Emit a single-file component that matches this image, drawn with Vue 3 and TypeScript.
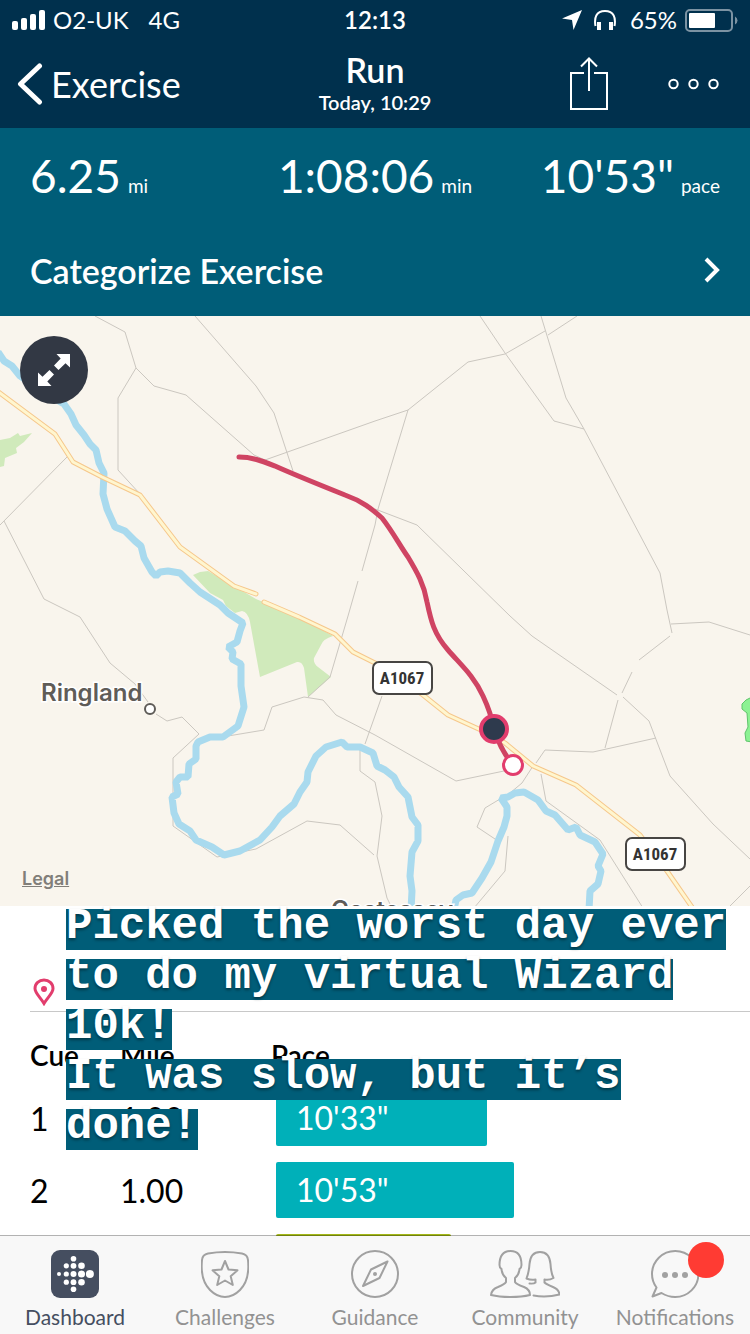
<script setup lang="ts">
interface Split {
  cue: number
  mile: string
  pace: string
  share: number
  color: string
}

interface Tab {
  id: string
  label: string
}

const stats = [
  { value: '6.25', unit: 'mi' },
  { value: '1:08:06', unit: 'min' },
  { value: `10'53"`, unit: 'pace' },
]

const splits: Split[] = [
  { cue: 1, mile: '1.00', pace: `10'33"`, share: 47, color: '#00b0b9' },
  { cue: 2, mile: '1.00', pace: `10'53"`, share: 53, color: '#00b0b9' },
]

const nextSplit = { share: 39, color: '#a3b819' }

const caption = [
  'Picked the worst day ever',
  'to do my virtual Wizard',
  '10k!',
  'It was slow, but it’s',
  'done!',
]

const tabs: Tab[] = [
  { id: 'dashboard', label: 'Dashboard' },
  { id: 'challenges', label: 'Challenges' },
  { id: 'guidance', label: 'Guidance' },
  { id: 'community', label: 'Community' },
  { id: 'notifications', label: 'Notifications' },
]

const logoDots: [number, number, number][] = [
  [22.5, 8.7, 2.8],
  [15.3, 15.8, 2.6], [22.5, 15.8, 2.9], [30.5, 15.8, 3.3],
  [8, 24, 2], [15.3, 24, 2.6], [22.5, 24, 3], [30.5, 24, 3.5], [38.9, 24, 4],
  [15.3, 32.2, 2.6], [22.5, 32.2, 2.9], [30.5, 32.2, 3.3],
  [22.5, 39.3, 2.8],
]

const lanes = [
  '95,0 125,16 136,52 154,70 186,79 254,139 265,144',
  '136,52 118,82 118,154 140,178',
  '195,0 256,70 274,97 293,155',
  '265,144 375,105 408,94 468,46 505,38 545,15',
  '548,19 577,0',
  '480,0 505,37 554,105 584,113',
  '541,0 566,82 584,113 660,257 667,294 672,317',
  '408,94 378,193 375,209 362,255',
  '358,265 348,300 330,361 308,381',
  '375,193 417,209 510,300 532,320 617,379',
  '623,381 649,405 670,460 713,508 750,543',
  '67,141 0,209',
  '4,205 44,283 80,301 110,347 135,368 148,386',
  '156,398 167,405 182,401 199,418 173,442 173,510 217,541 256,533 307,505 340,509 374,539',
  '360,434 360,455 375,466 382,500 377,540 387,582 392,592',
  '228,420 264,414 272,391 304,381 323,384 336,399 375,419 456,465 504,455',
  '382,380 365,428',
  '671,308 709,306 750,319',
  '670,320 639,344',
  '632,356 622,377',
  '618,384 605,432',
  '536,447 545,434 593,436 656,422',
  '533,450 522,467 510,477 485,492 477,511 495,523',
  '541,458 546,485 600,524 643,592',
  '508,520 505,555 474,592',
  '750,570 728,592',
]

const rivers = [
  '-2,36 4,45 12,50 20,60 40,74 64,88 71,98 76,109 84,119 90,128 96,134 99,147 104,157 103,178 107,193 115,211 125,215 135,225 141,230 144,242 152,256 156,260 160,256 168,255 180,257 190,267 200,276 220,289 228,297 243,307 240,315 237,326 228,331 233,336 232,343 241,348 241,370 244,391 238,410 223,421 210,421 198,426 196,430 196,443 189,448 188,461 180,461 176,466 178,478 172,481 174,497 179,508 190,515 196,524 212,531 224,539 240,535 260,524 272,511 280,500 294,488 300,476 307,466 308,456 316,440 326,431 342,426 347,431 360,431 373,437 377,450 385,454 394,461 399,471 408,481 412,501 418,509 418,525 412,536 410,560 412,575 411,594',
  '454,594 456,584 463,579 472,577 482,562 491,546 498,525 504,511 507,500 507,491 501,482 508,481 515,477 524,476 538,484 546,495 555,499 568,514 576,511 580,519 595,526 603,538 598,550 601,555 598,568 590,575 589,594',
]

const roads = [
  '-4,74 20,92 55,118 73,146 102,161 140,179 180,231 234,270 256,278',
  '264,286 299,301 335,318 353,336 375,347 423,379 448,399 494,420 505,427 533,450 576,469 640,519 667,555 694,594',
]
</script>

<template>
  <div class="app">
    <header class="top">
      <div class="status">
        <div class="status-left">
          <svg class="signal" viewBox="0 0 33 20" aria-hidden="true">
            <rect x="0" y="11" width="6" height="9" rx="2" />
            <rect x="9" y="8" width="6" height="12" rx="2" />
            <rect x="18" y="4" width="6" height="16" rx="2" />
            <rect x="27" y="0" width="6" height="20" rx="2" />
          </svg>
          <span>O2-UK</span>
          <span class="network">4G</span>
        </div>
        <time class="clock">12:13</time>
        <div class="status-right">
          <svg class="locate" viewBox="0 0 20 20" aria-hidden="true">
            <path d="M20 0 L11.500 20 L10 10 L0 8.500 Z" />
          </svg>
          <svg class="phones" viewBox="0 0 22 20" aria-hidden="true">
            <path d="M1.500 16 C0 8 2 1 11 1 C20 1 22 8 20.500 16" fill="none" stroke="#fff" stroke-width="2" />
            <rect x="3" y="12" width="4" height="8" />
            <rect x="15" y="12" width="4" height="8" />
          </svg>
          <span class="percent">65%</span>
          <svg class="battery" viewBox="0 0 53 23" aria-hidden="true">
            <rect x="1" y="1" width="46" height="21" rx="4" fill="none" stroke="#7c93a3" stroke-width="2" />
            <rect x="4" y="4" width="26" height="15" rx="1" />
            <path d="M50 7.500 Q52.500 9 52.500 11.500 Q52.500 14 50 15.500 Z" fill="#7c93a3" />
          </svg>
        </div>
      </div>

      <nav class="nav">
        <button class="back" type="button">
          <svg viewBox="0 0 26 44" aria-hidden="true">
            <path d="M22.500 4 L3.500 22 L22.500 40" />
          </svg>
          <span>Exercise</span>
        </button>
        <div class="heading">
          <h1>Run</h1>
          <p>Today, 10:29</p>
        </div>
        <div class="actions">
          <button type="button" aria-label="Share">
            <svg class="share" viewBox="0 0 38 54" aria-hidden="true">
              <path d="M14 16 H1 V52 H37 V16 H24 M19 34 V2 M11 9.500 L19 1.500 L27 9.500" />
            </svg>
          </button>
          <button type="button" aria-label="More">
            <svg class="more" viewBox="0 0 51 12" aria-hidden="true">
              <circle cx="5.500" cy="6" r="4.200" />
              <circle cx="25.500" cy="6" r="4.200" />
              <circle cx="45.500" cy="6" r="4.200" />
            </svg>
          </button>
        </div>
      </nav>
    </header>

    <section class="summary">
      <div class="stats">
        <p v-for="s in stats" :key="s.unit">
          <strong>{{ s.value }}</strong><span>{{ s.unit }}</span>
        </p>
      </div>
      <button class="categorize" type="button">
        <span>Categorize Exercise</span>
        <svg viewBox="0 0 16 26" aria-hidden="true">
          <path d="M2 2 L13 13 L2 24" />
        </svg>
      </button>
    </section>

    <main class="content">
      <section class="map">
        <svg class="map-art" viewBox="0 0 750 590" role="img" aria-label="Route map">
          <path class="wood" d="M0 124 L10 122 L18 117 L20 120 L32 117 L24 126 L16 132 L17 137 L5 142 L4 150 L0 151 Z" />
          <path class="wood" d="M193 259 L200 256 L208 255 L220 262 L234 270 L256 283 L299 301 L333 320 Q323 323 321 329 L314 342 Q313 347 318 351 L331 361 L308 381 L304 352 Q302 345 297 346 L260 361 L250 306 Q248 296 242 295 L235 297 L226 290 L223 284 L210 277 Z" />
          <g class="lanes">
            <polyline v-for="(l, i) in lanes" :key="i" :points="l" />
          </g>
          <g class="rivers">
            <polyline v-for="(r, i) in rivers" :key="i" :points="r" />
          </g>
          <g class="road-edge">
            <polyline v-for="(r, i) in roads" :key="i" :points="r" />
          </g>
          <g class="road-fill">
            <polyline v-for="(r, i) in roads" :key="i" :points="r" />
          </g>
          <path class="park" d="M752 381 L746 384 L742 388 L742 393 L747 397 L748 411 L745 417 L746 425 L752 426 Z" />
          <path class="run" d="M239 141 C252 141 262 145 275 150 C295 159 320 169 345 179 C362 185 372 193 382 202 C393 216 400 230 408 241 C417 256 424 268 427 286 C431 305 434 318 448 334 C461 349 474 360 483 380 Q491 397 494 413 Q500 433 513 449" />
          <circle class="finish" cx="494" cy="413" r="13" />
          <circle class="start" cx="513" cy="449" r="9.500" />

          <g class="shield">
            <rect x="373" y="346" width="59" height="32" rx="6" />
            <text x="402" y="368">A1067</text>
            <rect x="626" y="522" width="59" height="32" rx="6" />
            <text x="655" y="544">A1067</text>
          </g>
          <circle class="town" cx="150" cy="393" r="5" />
          <g class="places">
            <text x="41" y="385">Ringland</text>
            <text x="331" y="602">Costessey</text>
          </g>
        </svg>
        <button class="expand" type="button" aria-label="Expand map">
          <svg viewBox="0 0 32 32" aria-hidden="true">
            <path d="M18.500 0 H32 V13.500 L27.500 9.300 L20.500 16 L16 11.500 L22.700 4.600 Z" />
            <path d="M13.500 32 H0 V18.500 L4.500 22.700 L11.500 16 L16 20.500 L9.300 27.400 Z" />
          </svg>
        </button>
        <a class="legal" href="#legal">Legal</a>
      </section>

      <section class="details">
        <div class="place-row">
          <svg class="pin" viewBox="0 0 22 28" aria-hidden="true">
            <path d="M11 25.500 C7 19 2 15 2 10.500 C2 5.500 6 2 11 2 C16 2 20 5.500 20 10.500 C20 15 15 19 11 25.500 Z" />
            <circle cx="11" cy="11" r="3" />
          </svg>
        </div>
        <table class="splits">
          <thead>
            <tr>
              <th class="col-cue" scope="col">Cue</th>
              <th class="col-mile" scope="col">Mile</th>
              <th scope="col">Pace</th>
            </tr>
          </thead>
          <tbody>
            <tr v-for="s in splits" :key="s.cue">
              <td>{{ s.cue }}</td>
              <td>{{ s.mile }}</td>
              <td>
                <div class="bar" :style="{ width: s.share + '%', background: s.color }">{{ s.pace }}</div>
              </td>
            </tr>
            <tr>
              <td></td>
              <td></td>
              <td>
                <div class="bar" :style="{ width: nextSplit.share + '%', background: nextSplit.color }"></div>
              </td>
            </tr>
          </tbody>
        </table>
        <p class="caption">
          <span v-for="line in caption" :key="line">{{ line }}</span>
        </p>
      </section>
    </main>

    <nav class="tabs">
      <button
        v-for="t in tabs"
        :key="t.id"
        class="tab"
        :class="{ active: t.id === 'dashboard' }"
        type="button"
      >
        <span class="tab-icon">
          <svg v-if="t.id === 'dashboard'" class="i48" viewBox="0 0 48 48" aria-hidden="true">
            <rect width="48" height="48" rx="9" fill="#454e60" />
            <circle v-for="(d, i) in logoDots" :key="i" :cx="d[0]" :cy="d[1]" :r="d[2]" fill="#fff" />
          </svg>
          <svg v-else-if="t.id === 'challenges'" class="i48 line" viewBox="0 0 48 48" aria-hidden="true">
            <path d="M7 3.500 Q24 0.500 41 3.500 Q46.500 4.500 47 10 Q49 30 39 40 Q32 47 24 47 Q16 47 9 40 Q-1 30 1 10 Q1.500 4.500 7 3.500 Z" />
            <path d="M24 11 L27.500 19.500 L36.500 20.300 L29.700 26.300 L31.800 35 L24 30.500 L16.200 35 L18.300 26.300 L11.500 20.300 L20.500 19.500 Z" />
          </svg>
          <svg v-else-if="t.id === 'guidance'" class="i48 line" viewBox="0 0 48 48" aria-hidden="true">
            <circle cx="24" cy="24" r="23" />
            <path d="M36.500 11.500 L20 19.500 L12 36 L28.500 28 Z" />
            <circle cx="24" cy="24" r="2" class="solid" />
          </svg>
          <svg v-else-if="t.id === 'community'" class="i70 line" viewBox="0 0 70 48" aria-hidden="true">
            <path d="M16 28 Q12 25 11.500 19 Q9.500 18 9.500 15 Q9.500 1 20.500 1 Q31.500 1 31.500 15 Q31.500 18 29.500 19 Q29 25 25 28 V32 Q26 34 34 37 Q40 39.500 40 45 Q32 47 20.500 47 Q9 47 1 45 Q1.500 39.500 8 37 Q15 34 16 32 Z" />
            <path d="M39.500 33.500 Q44 34 45.500 32.500 V29.500 Q41 30.500 36.500 28.500 Q39 22 39.500 14 Q40.500 2 50 2 Q59.500 2 60.500 14 Q61 23 63.500 28 Q59 30.500 54.500 29.500 V32.500 Q56 34 63 37 Q69 39.500 69.500 44.500 Q56 48 43.500 45.500" />
          </svg>
          <svg v-else class="i48 line" viewBox="0 0 48 48" aria-hidden="true">
            <path d="M5.500 37.500 Q1 31.500 1 24 A23.200 23 0 1 1 24 47 Q17 47 10.500 43 L1.500 46.500 Z" />
            <circle cx="14" cy="25" r="3" class="solid" />
            <circle cx="24" cy="25" r="3" class="solid" />
            <circle cx="34" cy="25" r="3" class="solid" />
          </svg>
          <i v-if="t.id === 'notifications'" class="badge"></i>
        </span>
        <span class="tab-label">{{ t.label }}</span>
      </button>
    </nav>
  </div>
</template>

<style>
body {
  margin: 0;
  background: #fff;
}
</style>

<style scoped>
* {
  box-sizing: border-box;
}

svg {
  display: block;
  flex: none;
}

button {
  margin: 0;
  padding: 0;
  border: 0;
  background: none;
  color: inherit;
  font: inherit;
  cursor: pointer;
}

h1,
p {
  margin: 0;
}

.app {
  display: flex;
  flex-direction: column;
  height: 100vh;
  overflow: hidden;
  background: #fff;
  color: #000;
  font-family: Lato, "Open Sans", sans-serif;
}

.top {
  flex: none;
  background: #00304d;
  color: #fff;
}

.status {
  display: grid;
  grid-template-columns: 1fr auto 1fr;
  align-items: center;
  height: 40px;
  padding: 0 12px;
  font-size: 24px;
  line-height: 40px;
}

.status svg {
  fill: #fff;
}

.status-left,
.status-right {
  display: flex;
  align-items: center;
}

.status-left {
  gap: 8px;
}

.status-right {
  justify-content: flex-end;
}

.signal {
  width: 33px;
  height: 20px;
}

.network {
  margin-left: 12px;
}

.clock {
  font-weight: 600;
}

.locate {
  width: 20px;
  height: 20px;
  margin-right: 12px;
}

.phones {
  width: 22px;
  height: 20px;
  margin-right: 14px;
}

.percent {
  margin-right: 8px;
}

.battery {
  width: 53px;
  height: 23px;
}

.nav {
  display: grid;
  grid-template-columns: 1fr auto 1fr;
  align-items: center;
  height: 88px;
  padding: 0 17px;
}

.back {
  display: flex;
  align-items: center;
  gap: 8px;
  justify-self: start;
  font-size: 36px;
  line-height: 44px;
}

.back svg {
  width: 26px;
  height: 44px;
  fill: none;
  stroke: #fff;
  stroke-width: 5;
  stroke-linecap: round;
  stroke-linejoin: round;
}

.heading {
  text-align: center;
}

.heading h1 {
  font-size: 34px;
  font-weight: 600;
  line-height: 36px;
}

.heading p {
  font-size: 20px;
  font-weight: 600;
  line-height: 28px;
}

.actions {
  display: flex;
  align-items: center;
  justify-content: flex-end;
  gap: 60px;
  padding-right: 14px;
}

.actions svg {
  fill: none;
  stroke: #fff;
  stroke-width: 2;
}

.share {
  width: 38px;
  height: 54px;
}

.more {
  width: 51px;
  height: 12px;
}

.summary {
  flex: none;
  padding: 18px 30px 16px;
  background: #005d78;
  color: #fff;
}

.stats {
  display: grid;
  grid-template-columns: 1fr auto 1fr;
  white-space: nowrap;
}

.stats p {
  font-size: 46px;
  line-height: 60px;
}

.stats p:last-child {
  text-align: right;
}

.stats strong {
  font-weight: 400;
}

.stats span {
  margin-left: 7px;
  font-size: 19px;
  line-height: 20px;
}

.categorize {
  display: flex;
  align-items: center;
  justify-content: space-between;
  width: 100%;
  height: 60px;
  margin-top: 34px;
  font-size: 34px;
  font-weight: 600;
}

.categorize svg {
  width: 16px;
  height: 26px;
  fill: none;
  stroke: #fff;
  stroke-width: 4;
}

.content {
  flex: 1;
  min-height: 0;
  overflow: hidden;
}

.map {
  position: relative;
  background: #f9f5ed;
}

.map-art {
  width: 100%;
  height: auto;
  fill: none;
  font-family: Inter, "Noto Sans", sans-serif;
}

.wood {
  fill: #d0eabb;
}

.park {
  fill: #8cf293;
  stroke: #5fc36b;
  stroke-width: 1;
}

.lanes {
  stroke: #cbc7c0;
  stroke-width: 1;
}

.rivers {
  stroke: #a9daee;
  stroke-width: 7;
  stroke-linejoin: bevel;
}

.road-edge {
  stroke: #f6c78b;
  stroke-width: 5;
  stroke-linecap: round;
  stroke-linejoin: round;
}

.road-fill {
  stroke: #fff6cf;
  stroke-width: 3;
  stroke-linecap: round;
  stroke-linejoin: round;
}

.run {
  stroke: #cf4463;
  stroke-width: 5;
  stroke-linecap: round;
}

.finish {
  fill: #2e3a4d;
  stroke: #e23d6d;
  stroke-width: 4;
}

.start {
  fill: #fff;
  stroke: #e23d6d;
  stroke-width: 3;
}

.shield rect {
  fill: #fff;
  stroke: #474543;
  stroke-width: 2;
}

.shield text {
  fill: #333;
  font-family: "Roboto Condensed", Roboto, sans-serif;
  font-size: 17px;
  font-weight: 700;
  text-anchor: middle;
}

.town {
  fill: #fff;
  stroke: #5f5c58;
  stroke-width: 2;
}

.places {
  fill: #5f5c58;
  stroke: #fff;
  stroke-width: 3;
  paint-order: stroke;
  font-size: 24px;
  font-weight: 600;
}

.expand {
  position: absolute;
  top: 20px;
  left: 20px;
  display: grid;
  place-items: center;
  width: 68px;
  height: 68px;
  border-radius: 50%;
  background: #323844;
}

.expand svg {
  width: 32px;
  height: 32px;
  fill: #fff;
}

.legal {
  position: absolute;
  bottom: 15px;
  left: 22px;
  color: #817e79;
  font-family: Inter, "Noto Sans", sans-serif;
  font-size: 18px;
  font-weight: 600;
  line-height: 24px;
}

.details {
  position: relative;
  padding-left: 30px;
}

.place-row {
  display: flex;
  align-items: flex-end;
  height: 106px;
  padding: 0 3px 5px;
  border-bottom: 1px solid #c8c8c8;
}

.pin {
  width: 22px;
  height: 28px;
  fill: none;
  stroke: #e23d6d;
  stroke-width: 3;
}

.pin circle {
  fill: #e23d6d;
  stroke: none;
}

.splits {
  width: 100%;
  padding-right: 30px;
  border-spacing: 0;
  table-layout: fixed;
}

.splits th {
  height: 70px;
  padding: 26px 0 0;
  font-size: 28px;
  font-weight: 600;
  line-height: 34px;
  text-align: left;
  vertical-align: top;
}

.col-cue {
  width: 90px;
}

.col-mile {
  width: 151px;
}

.splits td {
  height: 72px;
  padding: 0;
  font-size: 32px;
}

.bar {
  height: 56px;
  margin-left: 5px;
  padding-left: 20px;
  border-radius: 2px;
  color: #fff;
  line-height: 56px;
}

.caption {
  position: absolute;
  top: 3px;
  left: 66px;
  display: grid;
  justify-items: start;
  gap: 9px;
}

.caption span {
  padding-bottom: 6px;
  background: #005d78;
  color: #fff;
  font-family: "Liberation Mono", monospace;
  font-size: 44px;
  font-weight: 700;
  line-height: 35px;
  text-shadow: 0 2px 3px rgba(0, 0, 0, 0.4);
  white-space: nowrap;
}

.tabs {
  position: relative;
  display: grid;
  grid-template-columns: repeat(5, 1fr);
  flex: none;
  margin-top: -1px;
  border-top: 1px solid rgba(0, 0, 0, 0.3);
  background: #f8f8f8;
  background-clip: padding-box;
  color: #929292;
}

.tab {
  display: flex;
  flex-direction: column;
  align-items: center;
  gap: 7px;
  padding: 14px 0 5px;
}

.tab.active {
  color: #454e60;
}

.tab-icon {
  position: relative;
}

.tab-label {
  font-size: 21px;
  line-height: 24px;
}

.i48 {
  width: 48px;
  height: 48px;
}

.i70 {
  width: 70px;
  height: 48px;
}

.line {
  fill: none;
  stroke: #a1a1a1;
  stroke-width: 2;
  stroke-linejoin: round;
  stroke-linecap: round;
}

.line .solid {
  fill: #a1a1a1;
  stroke: none;
}

.badge {
  position: absolute;
  top: -8px;
  left: 37px;
  width: 36px;
  height: 36px;
  border-radius: 50%;
  background: #ff3b33;
}
</style>
